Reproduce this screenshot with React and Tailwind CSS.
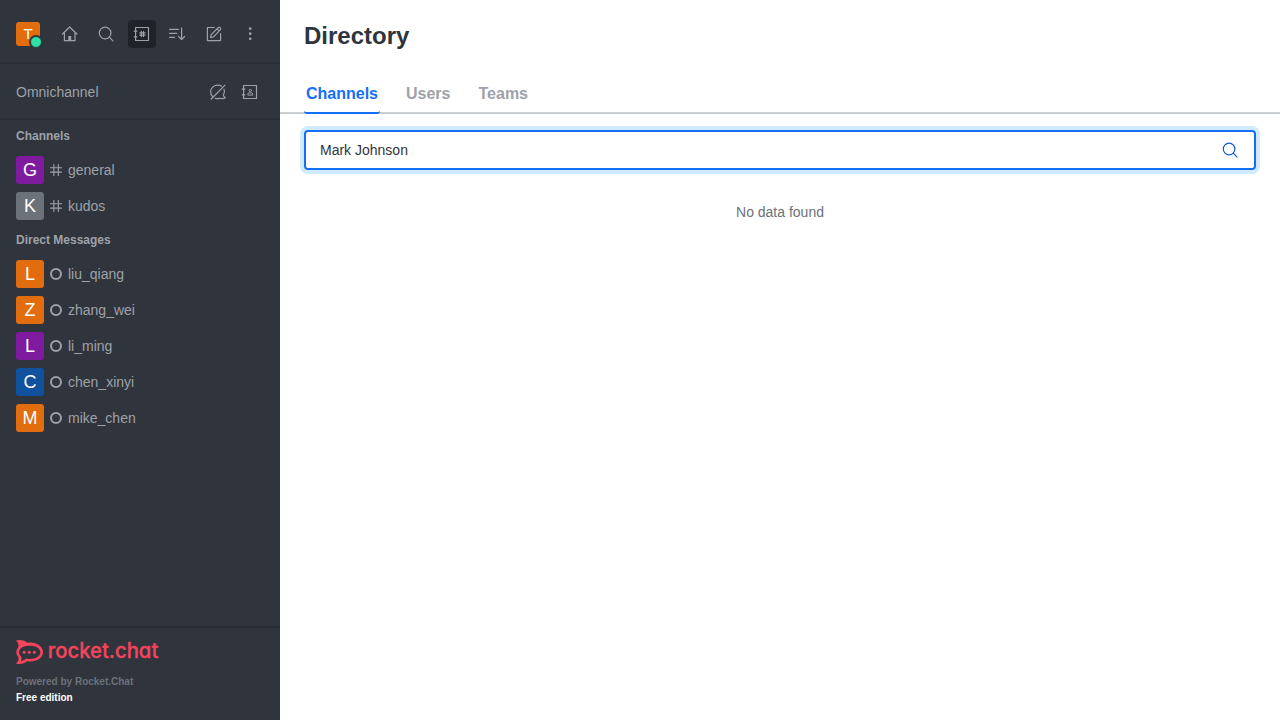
import React from 'react';

function Icon({ children, className = 'size-5', sw = 1.2 }) {
  return (
    <svg viewBox="0 0 20 20" className={className} fill="none" stroke="currentColor" strokeWidth={sw} strokeLinecap="round" strokeLinejoin="round">
      {children}
    </svg>
  );
}

const Home = () => (
  <Icon>
    <path d="M2.5 10 9.6 3 16.9 10M4.4 8.6V16.7H15V8.6" />
    <path d="M8.3 17V12H11.2V17Z" fill="currentColor" stroke="none" />
  </Icon>
);

const Search = () => (
  <Icon>
    <circle cx="9.1" cy="9" r="5.8" />
    <path d="M13.3 13.2 16.9 16.8" />
  </Icon>
);

const Directory = () => (
  <Icon>
    <path d="M3.6 3.5H16.5V16.5H3.6ZM2.2 7.2H4.8M2.2 12.8H4.8" />
    <path d="M9.3 7.4V12.6M11.5 7.4V12.6M7.8 8.9H13M7.8 11.1H13" />
  </Icon>
);

const Sort = () => (
  <Icon>
    <path d="M1.6 5.4H10.4M1.6 9.4H8.7M1.6 13.3H6.6M13.6 3.9V15.6M10.6 12.5 13.6 15.6 16.6 12.5" />
  </Icon>
);

const Edit = () => (
  <Icon>
    <path d="M10.2 3.5H3.4V16.6H16.6V9.5" />
    <path d="M6.6 13.5 7.2 10.6 14.4 3.5Q15.1 2.9 15.8 3.5L16.5 4.2Q17.1 4.9 16.5 5.6L9.5 12.8ZM13.1 4.8 15.2 6.9" />
  </Icon>
);

const Kebab = () => (
  <Icon>
    <g fill="currentColor" stroke="none">
      <circle cx="10.2" cy="4.7" r="1.35" />
      <circle cx="10.2" cy="9.7" r="1.35" />
      <circle cx="10.2" cy="14.8" r="1.35" />
    </g>
  </Icon>
);

const ChatOff = () => (
  <Icon>
    <path d="M13.6 4.2Q12 3.1 9.2 3.2C5.3 3.5 2.6 6.4 2.6 9.8Q2.6 12.5 4.5 14.6M16 7.2C16.8 9.2 16.5 11.5 15.4 13.3 15.7 14.5 16.6 15 17.3 15.7 15.3 17.1 13.4 16.7 12 16.2 10.3 16.9 8.6 16.8 7.2 16.2" />
    <path d="M17 3.2 3.2 17" />
  </Icon>
);

const Contacts = () => (
  <Icon>
    <path d="M3.6 3.5H16.5V16.5H3.6ZM2.2 7.2H4.8M2.2 12.8H4.8" />
    <circle cx="10.3" cy="8.5" r="1.2" strokeWidth="1" />
    <path d="M7.9 12.7V12Q7.9 10.9 8.9 10.9H11.7Q12.7 10.9 12.7 12V12.7Z" strokeWidth="1" />
  </Icon>
);

const Hash = () => (
  <Icon className="size-3">
    <path d="M6.4 .8V19.2M13.9 .8V19.2M.8 6.2H19.2M.8 13.6H19.2" strokeWidth="1.9" />
  </Icon>
);

const Offline = () => <span className="size-3 rounded-full border-2 border-[#9ea2a8]" />;

function Tool({ active, children }) {
  return (
    <button className={active ? 'flex size-7 items-center justify-center rounded bg-[#1f2329]' : 'flex size-7 items-center justify-center rounded'}>
      {children}
    </button>
  );
}

function Row({ letter, color, icon, name }) {
  return (
    <li className="flex h-9 items-center px-4">
      <span className={`flex size-7 items-center justify-center rounded-[3px] text-lg leading-none text-white ${color}`}>{letter}</span>
      <span className="ml-1.5 flex size-3">{icon}</span>
      <span className="ml-1.5 text-sm leading-5">{name}</span>
    </li>
  );
}

function Section({ title, children }) {
  return (
    <section>
      <h3 className="flex h-8 items-center px-4 text-xs font-bold">{title}</h3>
      <ul>{children}</ul>
    </section>
  );
}

function Logo() {
  return (
    <svg viewBox="0 0 144 24" className="h-6 w-36 overflow-visible">
      <path
        fill="#f5455c"
        fillRule="evenodd"
        d="M0 .5C4-.5 8.4-.1 11.4 2.8 19.5 1.6 27 6 27 12.2S19.5 22.4 11.1 21.2C8 24 4 24.5 0 23.4 2.6 21.3 3.2 18.8 2.2 17-.4 13.8-.4 10.4 2.2 7.4 3 5 2.4 2.8 0 .5ZM6.3 7.2C2.4 9.8 2.1 13.4 5 16.3 5.9 17.9 5.8 19.7 4.9 21.3 6.9 20.9 8.6 20 9.8 18.6 17.4 20 24.4 17 24.4 12.2 24.4 6.8 15.2 3.6 6.3 7.2Z"
      />
      <g fill="#f5455c">
        <circle cx="8.2" cy="12.2" r="1.55" />
        <circle cx="13.3" cy="12.2" r="1.55" />
        <circle cx="18.4" cy="12.2" r="1.55" />
      </g>
      <text x="31.8" y="18.3" textLength="110.5" lengthAdjust="spacingAndGlyphs" fill="#f5455c" className="font-['Inter',sans-serif] text-[21px] font-medium [font-feature-settings:'cv11']" stroke="#f5455c" strokeWidth="0.3">
        rocket.chat
      </text>
    </svg>
  );
}

function Sidebar() {
  return (
    <aside className="flex w-70 shrink-0 flex-col bg-[#2f343d] text-[#9ea2a8]">
      <header className="flex h-16 items-center border-b-2 border-[#282c34] px-4 pt-1.5">
        <div className="relative mr-4 flex size-6 items-center justify-center rounded-[3px] bg-[#e26d0e] pb-0.5 text-[15px] leading-none text-white">
          T
          <span className="absolute -right-0.5 -bottom-0.5 size-3 rounded-full border border-[#2f343d] bg-[#2de0a5] ring-1 ring-[#2f343d]" />
        </div>
        <div className="flex gap-2">
          <Tool><Home /></Tool>
          <Tool><Search /></Tool>
          <Tool active><Directory /></Tool>
          <Tool><Sort /></Tool>
          <Tool><Edit /></Tool>
          <Tool><Kebab /></Tool>
        </div>
      </header>
      <div className="flex h-14 items-center border-b-2 border-[#282c34] px-4 pt-0.5">
        <span className="grow text-sm">Omnichannel</span>
        <div className="flex gap-1">
          <Tool><ChatOff /></Tool>
          <Tool><Contacts /></Tool>
        </div>
      </div>
      <nav className="grow">
        <Section title="Channels">
          <Row letter="G" color="bg-[#7f1b9f]" icon={<Hash />} name="general" />
          <Row letter="K" color="bg-[#6c727a]" icon={<Hash />} name="kudos" />
        </Section>
        <Section title="Direct Messages">
          <Row letter="L" color="bg-[#e26d0e]" icon={<Offline />} name="liu_qiang" />
          <Row letter="Z" color="bg-[#e26d0e]" icon={<Offline />} name="zhang_wei" />
          <Row letter="L" color="bg-[#7f1b9f]" icon={<Offline />} name="li_ming" />
          <Row letter="C" color="bg-[#10529e]" icon={<Offline />} name="chen_xinyi" />
          <Row letter="M" color="bg-[#e26d0e]" icon={<Offline />} name="mike_chen" />
        </Section>
      </nav>
      <footer className="h-[94px] border-t-2 border-[#282c34] px-4 pt-3">
        <Logo />
        <div className="mt-2.5 text-[10px] leading-4 font-bold">
          <p className="text-[#6c727a]">Powered by Rocket.Chat</p>
          <p className="text-white">Free edition</p>
        </div>
      </footer>
    </aside>
  );
}

export default function App() {
  return (
    <div className="flex h-screen overflow-hidden bg-white font-['Liberation_Sans',Arial,sans-serif]">
      <Sidebar />
      <main className="flex grow flex-col">
        <h1 className="flex h-18 items-center px-6 text-2xl font-bold text-[#2f343d]">Directory</h1>
        <div className="flex h-[42px] gap-6 border-b-2 border-[#cbced1] pl-6 text-base font-bold text-[#9ea2a8]">
          <button className="-mb-0.5 h-[42px] rounded-[3px] border-b-2 border-[#156ff5] px-0.5 pt-1 text-[#156ff5]">Channels</button>
          <button className="-mb-0.5 px-0.5 pt-1 pb-0.5">Users</button>
          <button className="-mb-0.5 px-0.5 pt-1 pb-0.5">Teams</button>
        </div>
        <div className="px-6 pt-4">
          <label className="flex h-10 items-center rounded border-2 border-[#156ff5] px-3.5 text-sm text-[#2f343d] shadow-[0_0_0_4px_#d1ebfe]">
            <input defaultValue="Mark Johnson" className="grow outline-none" />
            <span className="text-[#095ad2]"><Search /></span>
          </label>
          <p className="mt-8 text-center text-sm text-[#6c727a]">No data found</p>
        </div>
      </main>
    </div>
  );
}
